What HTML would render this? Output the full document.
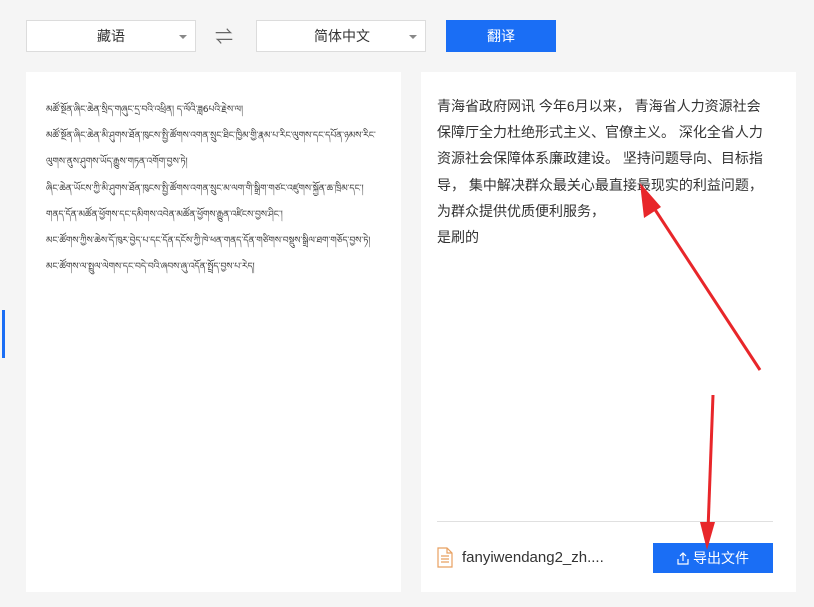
<!DOCTYPE html>
<html><head><meta charset="utf-8"><style>
*{margin:0;padding:0;box-sizing:border-box}
body{width:814px;height:607px;background:#f5f5f5;position:relative;overflow:hidden;font-family:"Liberation Sans","Noto Sans CJK SC",sans-serif;color:#333}
.sel{position:absolute;top:20px;height:32px;background:#fff;border:1px solid #dcdcdc;font-size:14px;line-height:30px}
.sel:after{content:"";position:absolute;right:8px;top:14px;border:4px solid transparent;border-top:4px solid #888}
.btn{position:absolute;background:#1a6ef5;color:#fff;font-size:14px;text-align:center}
.panel{position:absolute;top:72px;height:520px;background:#fff}
.tib{position:absolute;left:46px;top:97px;font-size:9.2px;line-height:26.2px;color:#333;white-space:nowrap;font-family:"DejaVu Sans",sans-serif;letter-spacing:-0.1px}
.cn{position:absolute;left:437px;top:93px;font-size:14px;line-height:26.2px;color:#333;white-space:nowrap}
</style></head><body>
<div style="position:absolute;left:2px;top:310px;width:3px;height:48px;background:#1a6ef5"></div>
<div class="sel" style="left:26px;width:170px"><span style="position:absolute;left:70px">藏语</span></div>
<div style="position:absolute;left:215px;top:23px;font-size:18px;color:#666">⇌</div>
<div class="sel" style="left:256px;width:170px"><span style="position:absolute;left:57px">简体中文</span></div>
<div class="btn" style="left:446px;top:20px;width:110px;height:32px;line-height:32px">翻译</div>
<div class="panel" style="left:26px;width:375px"></div>
<div class="panel" style="left:421px;width:375px"></div>
<div class="tib">མཚོ་སྔོན་ཞིང་ཆེན་སྲིད་གཞུང་དྲ་བའི་འཕྲིན། ད་ལོའི་ཟླ6པའི་རྗེས་ལ།<br>
མཚོ་སྔོན་ཞིང་ཆེན་མི་ཤུགས་ཐོན་ཁུངས་སྤྱི་ཚོགས་འགན་སྲུང་ཐིང་ཁྱིམ་གྱི་རྣམ་པ་རིང་ལུགས་དང་དཔོན་ཉམས་རིང་<br>
ལུགས་ནུས་ཤུགས་ཡོད་རྒྱུས་གཏན་འགོག་བྱས་ཏེ།<br>
ཞིང་ཆེན་ཡོངས་ཀྱི་མི་ཤུགས་ཐོན་ཁུངས་སྤྱི་ཚོགས་འགན་སྲུང་མ་ལག་གི་སྒྲིག་གཙང་འཛུགས་སྐྱོན་ཆ་ཁྲིམ་དང་།<br>
གནད་དོན་མཚོན་ཕྱོགས་དང་དམིགས་འབེན་མཚོན་ཕྱོགས་རྒྱུན་འཛིངས་བྱས་ཤིང་།<br>
མང་ཚོགས་ཀྱིས་ཆེས་དོ་ཁུར་བྱེད་པ་དང་དོན་དངོས་ཀྱི་ཁེ་ཕན་གནད་དོན་གཙིགས་བསྡུས་སྒྲིལ་ཐག་གཅོད་བྱས་ཏེ།<br>
མང་ཚོགས་ལ་སྤྲུལ་ལེགས་དང་བདེ་བའི་ཞབས་ཞུ་འདོན་སྤྲོད་བྱས་པ་རེད།</div>
<div class="cn">青海省政府网讯 今年6月以来， 青海省人力资源社会<br>保障厅全力杜绝形式主义、官僚主义。 深化全省人力<br>资源社会保障体系廉政建设。 坚持问题导向、目标指<br>导， 集中解决群众最关心最直接最现实的利益问题，<br>为群众提供优质便利服务，<br>是刷的</div>
<div style="position:absolute;left:437px;top:521px;width:336px;height:1px;background:#e0e0e0"></div>
<svg style="position:absolute;left:437px;top:547px" width="16" height="21" viewBox="0 0 16 21"><path d="M1 1h9l5 5v14H1z M10 1v5h5 M4 9h8 M4 12h8 M4 15h8" fill="none" stroke="#e8a060" stroke-width="1.2"/></svg>
<div style="position:absolute;left:462px;top:549px;font-size:15px;color:#333">fanyiwendang2_zh....</div>
<div class="btn" style="left:653px;top:543px;width:120px;height:30px;line-height:30px">
<svg style="vertical-align:-2px;margin-right:4px" width="12" height="13" viewBox="0 0 12 13"><path d="M6 9V1M3 4l3-3 3 3M1 7v5h10V7" fill="none" stroke="#fff" stroke-width="1.2"/></svg>导出文件</div>
<svg style="position:absolute;left:0;top:0" width="814" height="607">
<line x1="760" y1="370" x2="652" y2="205" stroke="#e8262a" stroke-width="3"/>
<polygon points="640,183 644,218 661,207" fill="#e8262a"/>
<line x1="713" y1="395" x2="708" y2="530" stroke="#e8262a" stroke-width="3"/>
<polygon points="707,550 700,522 715,522" fill="#e8262a"/>
</svg>
</body></html>
